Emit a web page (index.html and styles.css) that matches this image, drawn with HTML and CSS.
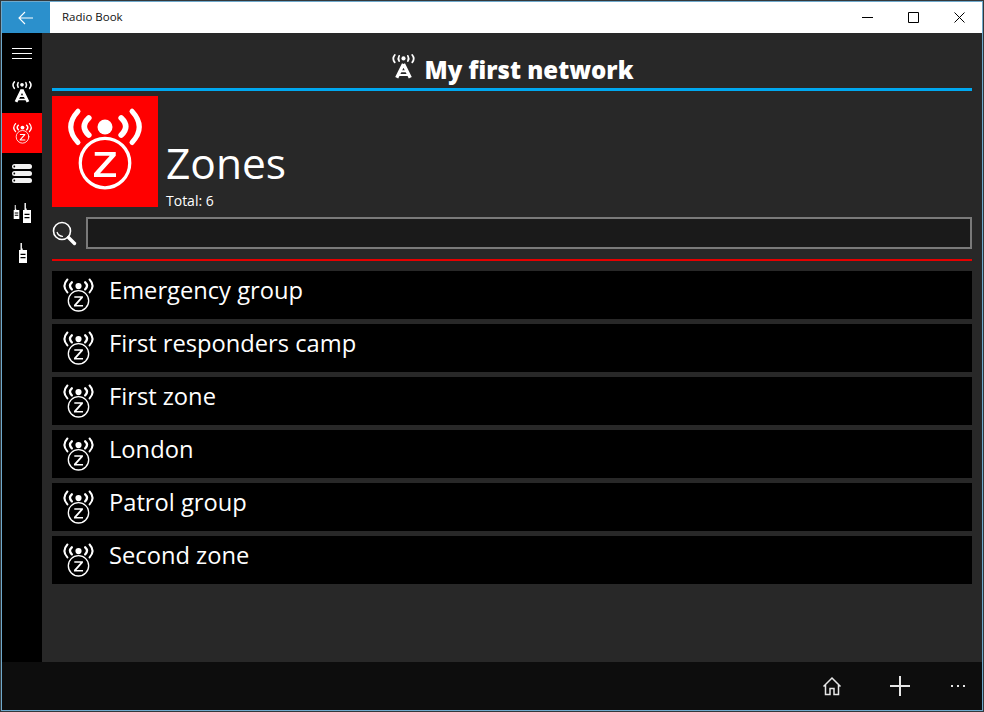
FILE: index.html
```html
<!DOCTYPE html>
<html lang="en">
<head>
    <meta charset="UTF-8">
    <title>Radio Book</title>
    <link rel="stylesheet" href="styles.css">
</head>
<body>

<svg class="defs" width="0" height="0">
    <symbol id="zone" viewBox="0 0 36 36">
        <circle cx="18" cy="8.800" r="3" fill="currentColor"/>
        <g fill="none" stroke="currentColor" stroke-linecap="round">
            <path d="M11.500 5.200Q7.900 8.600 11.500 12M24.500 5.200Q28.100 8.600 24.500 12" stroke-width="2.300"/>
            <path d="M7.200 2.500Q1.400 8.800 7.200 15M28.800 2.500Q34.600 8.800 28.800 15" stroke-width="2"/>
            <circle cx="18" cy="23.200" r="9.900" stroke-width="1.300"/>
        </g>
        <path d="M13.900 18.800h8.400v1.500l-6.300 7h6.400v1.500h-8.800v-1.500l6.300-7h-6z" fill="currentColor"/>
    </symbol>
    <symbol id="tower" viewBox="0 0 24 24">
        <circle cx="12" cy="4.200" r="2" fill="currentColor"/>
        <g fill="none" stroke="currentColor" stroke-linecap="round" stroke-width="1.700">
            <path d="M7.800 1.800q-1.500 2.500 0 5M16.200 1.800q1.500 2.500 0 5"/>
            <path d="M3.600 1q-2.800 3.400 0 7M20.400 1q2.800 3.400 0 7"/>
        </g>
        <path d="M12 9.500L5.500 22.800M12 9.500l6.500 13.300" fill="none" stroke="currentColor" stroke-width="3.200"/>
        <path d="M8 16.500h8M6.500 20.200h11" fill="none" stroke="currentColor" stroke-width="1.800"/>
    </symbol>
    <symbol id="servers" viewBox="0 0 24 24">
        <g fill="#f2f2f2">
            <rect x="2" y="3" width="20" height="5" rx="2.500"/>
            <rect x="2" y="10" width="20" height="5" rx="2.500"/>
            <rect x="2" y="17" width="20" height="5" rx="2.500"/>
        </g>
        <g fill="#000">
            <circle cx="4.300" cy="5.500" r=".9"/>
            <circle cx="4.300" cy="12.500" r=".9"/>
            <circle cx="4.300" cy="19.500" r=".9"/>
        </g>
    </symbol>
    <symbol id="radio" viewBox="0 0 10 20">
        <path d="M1 7h1.500V0h1.400v5.500h.8V7H9v13H1z" fill="currentColor"/>
        <path d="M2.500 10.800h5v1.200h-5zM2.500 14h5v1.200h-5z" fill="#000"/>
    </symbol>
</svg>

<div class="window">
    <header class="titlebar">
        <div class="back-btn">
            <svg width="16" height="14" viewBox="0 0 16 14"><path d="M7 1L1 7l6 6M1 7h14" fill="none" stroke="#fff" stroke-width="1.100"/></svg>
        </div>
        <span class="app-title">Radio Book</span>
        <div class="win-controls">
            <span class="win-btn"><svg width="11" height="11" viewBox="0 0 11 11"><path d="M0 5.500h11" stroke="#000"/></svg></span>
            <span class="win-btn"><svg width="11" height="11" viewBox="0 0 11 11"><path d="M.5.500h10v10H.500z" fill="none" stroke="#000"/></svg></span>
            <span class="win-btn"><svg width="11" height="11" viewBox="0 0 11 11"><path d="M.5.500l10 10M10.500.500l-10 10" stroke="#000"/></svg></span>
        </div>
    </header>

    <div class="main">
        <nav class="sidebar">
            <div class="nav-item hamburger"><span></span><span></span><span></span></div>
            <div class="nav-item tower-item"><svg width="22" height="22"><use href="#tower"/></svg></div>
            <div class="nav-item active"><svg width="23" height="23"><use href="#zone"/></svg></div>
            <div class="nav-item"><svg width="24" height="24"><use href="#servers"/></svg></div>
            <div class="nav-item radios">
                <svg class="radio-small" width="7" height="14"><use href="#radio"/></svg>
                <svg width="10" height="20"><use href="#radio"/></svg>
            </div>
            <div class="nav-item radio-single"><svg width="10" height="20"><use href="#radio"/></svg></div>
        </nav>

        <section class="content">
            <h1 class="network">
                <svg width="25" height="25"><use href="#tower"/></svg>
                My first network
            </h1>

            <div class="zones-head">
                <div class="zones-tile"><svg width="90" height="90"><use href="#zone"/></svg></div>
                <div class="zones-text">
                    <div class="zones-title">Zones</div>
                    <div class="zones-total">Total: 6</div>
                </div>
            </div>

            <div class="search-row">
                <svg width="25" height="25" viewBox="0 0 25 25">
                    <circle cx="10" cy="10" r="8.500" fill="none" stroke="#fff" stroke-width="1.600"/>
                    <path d="M5 11q1 4 6 4.500" fill="none" stroke="#fff" stroke-width="1.200"/>
                    <path d="M16.500 16.500l6 6" stroke="#fff" stroke-width="3.400" stroke-linecap="round"/>
                </svg>
                <input class="search-box" type="text">
            </div>

            <ul class="zone-list">
                <li class="zone-row"><svg width="37" height="37"><use href="#zone"/></svg><span class="zone-name">Emergency group</span></li>
                <li class="zone-row"><svg width="37" height="37"><use href="#zone"/></svg><span class="zone-name">First responders camp</span></li>
                <li class="zone-row"><svg width="37" height="37"><use href="#zone"/></svg><span class="zone-name">First zone</span></li>
                <li class="zone-row"><svg width="37" height="37"><use href="#zone"/></svg><span class="zone-name">London</span></li>
                <li class="zone-row"><svg width="37" height="37"><use href="#zone"/></svg><span class="zone-name">Patrol group</span></li>
                <li class="zone-row"><svg width="37" height="37"><use href="#zone"/></svg><span class="zone-name">Second zone</span></li>
            </ul>
        </section>
    </div>

    <footer class="appbar">
        <svg class="home-icon" width="20" height="20" viewBox="0 0 20 20"><path d="M1.500 10.500L10 2l8.500 8.500M3.500 8.500V18.500H8V12.500H12V18.500H16.500V8.500" fill="none" stroke="#e6e6e6" stroke-width="1.500"/></svg>
        <svg class="add-icon" width="22" height="22" viewBox="0 0 22 22"><path d="M11 1v20M1 11h20" stroke="#e6e6e6" stroke-width="2"/></svg>
        <svg width="14" height="2" viewBox="0 0 14 2"><path d="M0 0h2v2H0zM6 0h2v2H6zM12 0h2v2h-2z" fill="#e6e6e6"/></svg>
    </footer>
</div>

</body>
</html>
```

FILE: styles.css
```css
* {
    box-sizing: border-box;
}

body {
    margin: 0;
    padding: 1px;
    width: 984px;
    height: 712px;
    overflow: hidden;
    font-family: "Open Sans", "Noto Sans", sans-serif;
    color: white;
    background-color: #33383b;
}

.defs {
    position: absolute;
}

.window {
    display: flex;
    flex-direction: column;
    height: 710px;
    border: 1px solid #6fa9cc;
    background-color: #282828;
}

.titlebar {
    display: flex;
    align-items: center;
    height: 31px;
    background-color: white;
    color: #111;
}

.back-btn {
    display: flex;
    align-items: center;
    justify-content: center;
    width: 48px;
    height: 31px;
    background-color: #2b90cc;
}

.app-title {
    margin: 0 0 2px 12px;
    font-size: 11.500px;
}

.win-controls {
    display: flex;
    margin-left: auto;
}

.win-btn {
    display: flex;
    align-items: center;
    justify-content: center;
    width: 46px;
    height: 31px;
}

.main {
    display: flex;
    flex: 1;
    min-height: 0;
}

.sidebar {
    width: 40px;
    background-color: black;
    display: flex;
    flex-direction: column;
}

.nav-item {
    display: flex;
    align-items: center;
    justify-content: center;
    height: 40px;
    color: white;
}

.nav-item.active {
    background-color: #ff0000;
}

.hamburger {
    flex-direction: column;
    gap: 4px;
}

.hamburger span {
    display: block;
    width: 20px;
    height: 1px;
    background-color: white;
}

.tower-item {
    padding-bottom: 2px;
}

.radios {
    gap: 2px;
    align-items: flex-end;
    padding-bottom: 10px;
}

.radio-small {
    margin-bottom: 4px;
}

.radio-single {
    padding-left: 2px;
}

.content {
    flex: 1;
    padding: 0 10px;
}

.network {
    display: flex;
    align-items: center;
    justify-content: center;
    gap: 9px;
    height: 58px;
    margin: 0;
    padding-top: 17px;
    border-bottom: 3px solid #00a8f0;
    font-size: 24px;
    font-weight: 800;
}

.network svg {
    margin-top: -6px;
}

.zones-head {
    display: flex;
    height: 111px;
    margin-top: 5px;
}

.zones-tile {
    display: flex;
    align-items: center;
    justify-content: center;
    width: 106px;
    height: 111px;
    background-color: #ff0000;
    padding-bottom: 3px;
}

.zones-text {
    display: flex;
    flex-direction: column;
    justify-content: flex-end;
    height: 113px;
    margin-left: 8px;
}

.zones-title {
    font-size: 42.500px;
    line-height: 56px;
    margin-bottom: 2px;
}

.zones-total {
    font-size: 14px;
    line-height: 16px;
}

.search-row {
    display: flex;
    align-items: center;
    gap: 9px;
    margin-top: 10px;
    padding-bottom: 10px;
    border-bottom: 2px solid #e60000;
}

.search-box {
    flex: 1;
    height: 32px;
    background-color: #1a1a1a;
    border: 2px solid #7a7a7a;
}

.zone-list {
    list-style: none;
    margin: 10px 0 0;
    padding: 0;
    display: flex;
    flex-direction: column;
    gap: 5px;
}

.zone-row {
    display: flex;
    align-items: center;
    gap: 12px;
    height: 48px;
    padding-left: 8px;
    background-color: black;
    font-size: 23.700px;
    line-height: 32px;
}

.zone-name {
    margin-bottom: 10px;
}

.appbar {
    display: flex;
    align-items: center;
    justify-content: flex-end;
    height: 48px;
    background-color: #0d0d0d;
    padding-right: 17px;
}

.home-icon {
    margin-right: 47px;
}

.add-icon {
    margin-right: 40px;
}
```
